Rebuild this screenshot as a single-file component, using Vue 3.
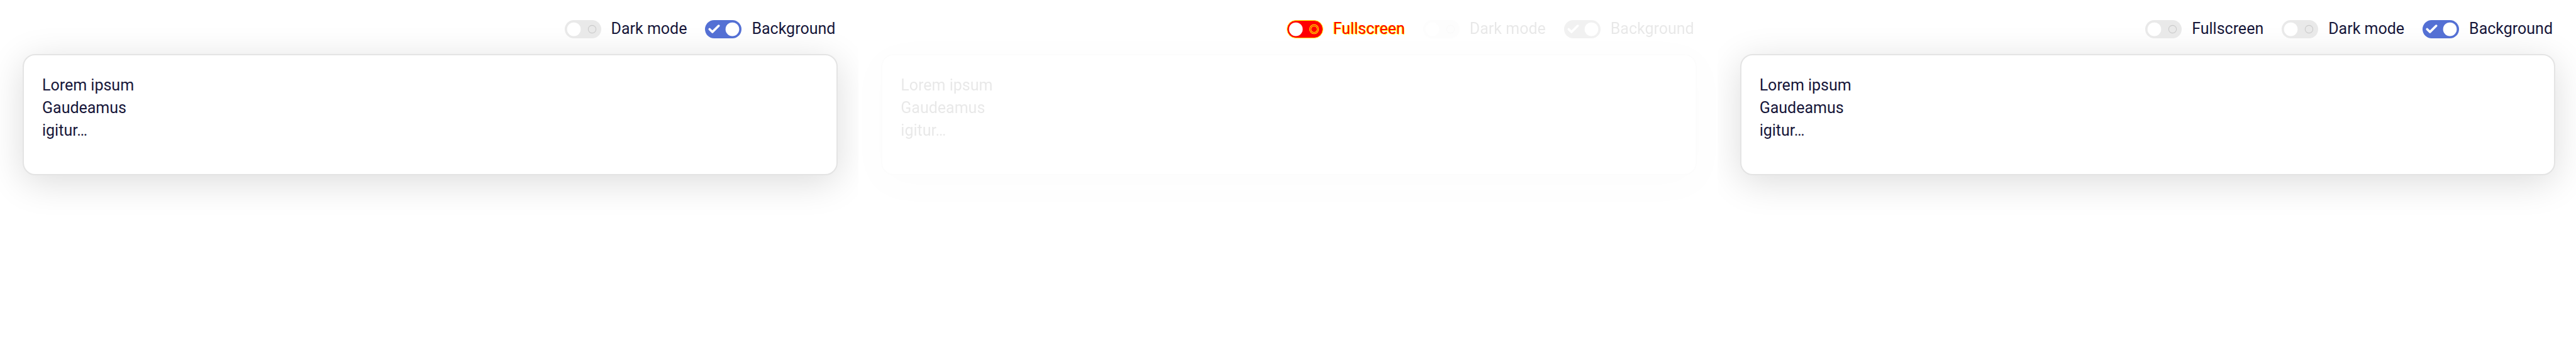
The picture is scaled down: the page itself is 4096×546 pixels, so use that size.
<script setup>
import { reactive } from 'vue'

const lines = ['Lorem ipsum', 'Gaudeamus', 'igitur…']

const panels = reactive([
  {
    id: 'before',
    faded: false,
    toggles: [
      { name: 'dark', label: 'Dark mode', on: false },
      { name: 'background', label: 'Background', on: true },
    ],
  },
  {
    id: 'diff',
    faded: true,
    toggles: [
      { name: 'fullscreen', label: 'Fullscreen', on: false, changed: true },
      { name: 'dark', label: 'Dark mode', on: false },
      { name: 'background', label: 'Background', on: true },
    ],
  },
  {
    id: 'after',
    faded: false,
    toggles: [
      { name: 'fullscreen', label: 'Fullscreen', on: false },
      { name: 'dark', label: 'Dark mode', on: false },
      { name: 'background', label: 'Background', on: true },
    ],
  },
])
</script>

<template>
  <main class="page">
    <section v-for="panel in panels" :key="panel.id" class="panel" :class="{ faded: panel.faded }">
      <header class="toolbar">
        <label
          v-for="toggle in panel.toggles"
          :key="toggle.name"
          class="toggle"
          :class="{ changed: toggle.changed }"
          :for="`${panel.id}-${toggle.name}`"
        >
          <span class="switch">
            <input :id="`${panel.id}-${toggle.name}`" v-model="toggle.on" class="track" type="checkbox" />
            <svg class="glyph" viewBox="0 0 64 32" aria-hidden="true">
              <template v-if="toggle.on">
                <path class="check" d="M8 16 L13 20.8 L24 10" />
                <circle class="knob" cx="48" cy="16" r="12" />
              </template>
              <template v-else>
                <circle class="knob" cx="16" cy="16" r="12" />
                <circle class="ring" cx="48" cy="16" r="6.8" />
                <circle v-if="toggle.changed" class="ring-core" cx="48" cy="16" r="6.8" />
              </template>
            </svg>
          </span>
          <span class="text">{{ toggle.label }}</span>
        </label>
      </header>
      <article class="card">
        <p v-for="line in lines" :key="line" class="line">{{ line }}</p>
      </article>
    </section>
  </main>
</template>

<style>
body {
  margin: 0;
  background: #fff;
}
</style>

<style scoped>
.page {
  display: grid;
  grid-template-columns: repeat(3, 1fr);
  min-height: 100vh;
  font-family: Roboto, 'Liberation Sans', sans-serif;
  font-size: 25px;
  line-height: 36px;
  color: #17173a;
}

.panel {
  box-sizing: border-box;
  padding: 28px 33px 32px 36px;
  overflow: hidden;
}

.toolbar {
  display: flex;
  justify-content: flex-end;
  gap: 29px;
  padding-right: 4px;
  margin-bottom: 22px;
}

.toggle {
  display: flex;
  align-items: center;
  gap: 16px;
  cursor: pointer;
}

.switch {
  position: relative;
  display: block;
  width: 58px;
  height: 29px;
}

.track {
  display: block;
  width: 100%;
  height: 100%;
  margin: 0;
  appearance: none;
  border-radius: 15px;
  background: #e9e9e9;
  cursor: pointer;
}

.track:checked {
  background: #5470d4;
}

.glyph {
  position: absolute;
  inset: 0;
  width: 100%;
  height: 100%;
  pointer-events: none;
}

.knob {
  fill: #fff;
}

.ring {
  fill: none;
  stroke: #cbcbcb;
  stroke-width: 1.2;
}

.check {
  fill: none;
  stroke: #fff;
  stroke-width: 4;
  stroke-linecap: round;
  stroke-linejoin: round;
}

.card {
  box-sizing: border-box;
  min-height: 193px;
  padding: 30px 29px;
  border: 2px solid #e4e4e4;
  border-radius: 20px;
  background: #fff;
  box-shadow: 0 11px 58px rgba(0, 0, 0, 0.14);
}

.line {
  margin: 0;
}

.faded .card,
.faded .toggle:not(.changed) {
  filter: grayscale(1) opacity(0.1);
}

.changed .track {
  border: 1px solid #ff0;
  background: #f00;
}

.changed .ring {
  stroke: #ff0;
  stroke-width: 3.4;
}

.ring-core {
  fill: none;
  stroke: #f00;
  stroke-width: 1.2;
}

.changed .text {
  color: #f00;
  text-shadow: -1px 0 #ff0, 1px 1px #ff0;
}
</style>
